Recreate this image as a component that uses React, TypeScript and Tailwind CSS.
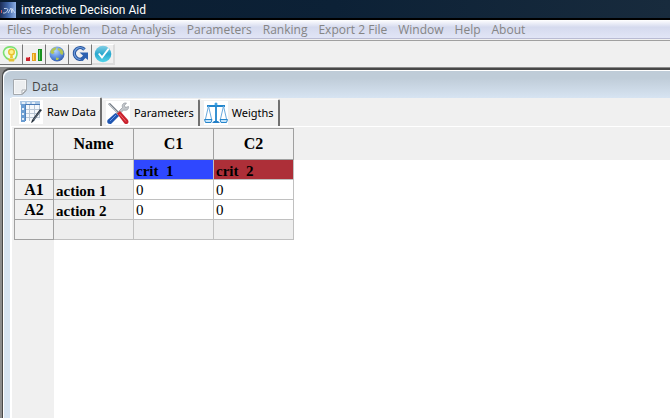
import type { ReactNode } from 'react';

const MENU_ITEMS = [
  'Files',
  'Problem',
  'Data Analysis',
  'Parameters',
  'Ranking',
  'Export 2 File',
  'Window',
  'Help',
  'About',
];

const ROWS = [
  { id: 'A1', name: 'action 1', values: [0, 0] },
  { id: 'A2', name: 'action 2', values: [0, 0] },
];

function AppLogo() {
  return (
    <svg width="16" height="16" viewBox="0 0 16 16" className="shrink-0" aria-hidden="true">
      <defs>
        <linearGradient id="logo" x1="0" x2="1">
          <stop offset="0" stopColor="#1c2c54" />
          <stop offset="0.5" stopColor="#3f66a8" />
          <stop offset="1" stopColor="#8fb0e4" />
        </linearGradient>
      </defs>
      <rect width="16" height="16" fill="url(#logo)" />
      <path d="M1.5 8v3" stroke="#c9575c" />
      <path d="M4 6.500h2.500l1.500 1-1 2-2 1.500H3M8 11l3-5 1 5M13 6.500l-1.500 4M12 6.500l3 4.500" fill="none" stroke="#dbe6f8" strokeWidth="0.800" />
    </svg>
  );
}

function BulbIcon() {
  return (
    <svg width="18" height="18" viewBox="0 0 18 18" aria-hidden="true">
      <path d="M7 14.500C3 13 .5 8.500 2 5.500S7 1.500 10 2s5 3.500 5 6.500-1 4-2 5.500" fill="#f0fbea" stroke="#7be070" strokeWidth="1.600" />
      <circle cx="9.500" cy="7" r="2.800" fill="#fff08a" stroke="#e6c032" strokeWidth="1.400" />
      <path d="M8.500 9.500h2l.5 3.500h-3z" fill="#efc52d" />
      <path d="M6 13.500h7l-1 3H7z" fill="#e3c235" />
    </svg>
  );
}

function BarsIcon() {
  return (
    <svg width="18" height="18" viewBox="0 0 18 18" aria-hidden="true">
      <rect x="1" y="12" width="4" height="4" fill="#c9202b" />
      <path d="M1 12.500h3" stroke="#f08488" />
      <rect x="7" y="8" width="4" height="8" fill="#e8a21c" />
      <path d="M8.500 9v6" stroke="#ffd86b" />
      <rect x="13" y="4" width="4" height="12" fill="#18911f" />
      <path d="M14.500 5v10" stroke="#66d866" />
    </svg>
  );
}

function GlobeIcon() {
  return (
    <svg width="18" height="18" viewBox="0 0 18 18" aria-hidden="true">
      <defs>
        <radialGradient id="globe" cx="0.400" cy="0.300" r="0.750">
          <stop offset="0" stopColor="#b2d2ff" />
          <stop offset="0.600" stopColor="#5b8cdc" />
          <stop offset="1" stopColor="#3158a6" />
        </radialGradient>
      </defs>
      <circle cx="9" cy="9" r="7.500" fill="url(#globe)" />
      <path d="M2.500 6l2-2.500 4-1.500-1 3-2 1 1 2-2 1-2-1zM10 3l3.500 1 2 3-1 3-2-1-1-3-2-1zM8 12.500l3 .5-1 2H8z" fill="#b4c552" />
    </svg>
  );
}

function ReloadIcon() {
  return (
    <svg width="18" height="18" viewBox="0 0 18 18" aria-hidden="true">
      <path d="M13.500 4.500A5.800 5.800 0 1 0 12 13.500" fill="none" stroke="#2a569c" strokeWidth="3.400" />
      <path d="M13.500 4.500A5.800 5.800 0 1 0 12 13.500" fill="none" stroke="#6d9ddf" strokeWidth="1.400" />
      <path d="M8.500 7.500H17V15l-2.500-2-3 3-2.500-2 3-3.500z" fill="#2d62b1" />
    </svg>
  );
}

function CheckIcon() {
  return (
    <svg width="18" height="18" viewBox="0 0 18 18" aria-hidden="true">
      <defs>
        <linearGradient id="check" x1="0" y1="0" x2="0" y2="1">
          <stop offset="0" stopColor="#83cfe5" />
          <stop offset="0.500" stopColor="#29a8ce" />
          <stop offset="1" stopColor="#53d5ea" />
        </linearGradient>
      </defs>
      <circle cx="9" cy="9" r="8.300" fill="url(#check)" />
      <path d="M4 9l1.500-1L8 11l6-8 1.500 1L8 14z" fill="#fff" />
    </svg>
  );
}

function PageIcon() {
  return (
    <svg width="14" height="16" viewBox="0 0 14 16" className="shrink-0" aria-hidden="true">
      <path d="M.5.500h13v11l-4 4H.500z" fill="#f6f7f8" stroke="#a4a9ae" />
      <path d="M2 2h10v9l-3 3H2z" fill="#eceef0" />
      <path d="M13 11H9v4z" fill="#fff" stroke="#a8adb2" />
    </svg>
  );
}

function TableIcon() {
  return (
    <svg width="24" height="24" viewBox="0 0 24 24" aria-hidden="true">
      <rect width="24" height="24" fill="#fff" />
      <rect x="2" y="2" width="19" height="18" fill="#f4f8fc" />
      <path d="M6 9.500h14M6 13.500h14M6 17.500h14M10.500 5v16M15.500 5v16M20.500 3v15" stroke="#b9c7d6" />
      <path d="M1 1h20v4H1z" fill="#a9c6e4" />
      <path d="M2 4h4v18H2z" fill="#6c9ed2" />
      <path d="M6 4.500h15" stroke="#4879b5" />
      <path d="M6.500 4v17" stroke="#4f83be" />
      <path d="M3 2h3v2H3zM8 2h3v2H8zM13 2h3v2h-3zM3 8h2v2H3zM3 13h2v2H3zM3 18h2v2H3z" fill="#e3eef9" />
      <path d="M21 9l2 1-9 12-2 1 1-3z" fill="#29333e" />
      <path d="M20.500 11l.5.500-6.500 8.500" stroke="#8da0b3" fill="none" strokeWidth="0.600" />
    </svg>
  );
}

function ToolsIcon() {
  return (
    <svg width="24" height="24" viewBox="0 0 24 24" aria-hidden="true">
      <rect width="24" height="24" fill="#fff" />
      <path d="M2 3l2-1 11 11-1.500 1.500z" fill="#777e87" />
      <path d="M3 3l11 11" stroke="#c1c6cb" />
      <path d="M9.500 13.500l7-7c-1-3 1-5 4-4.500l-2 2.500 1 2 3-1c.5 3-2 4.500-5 3.500l-6 6.500z" fill="#c3c7cb" stroke="#858c94" strokeWidth="0.600" />
      <path d="M11 12.500l3-2.500 8 9c1.500 3-.5 5-3.500 3.500z" fill="#c9222e" />
      <path d="M13.500 13l6.500 7.500" stroke="#f06a6d" />
      <path d="M9.500 12l3.500 3-8 8c-3 .5-4.500-1.500-3.500-4z" fill="#2157b2" />
      <path d="M10 14l-6 6" stroke="#6e9df0" />
    </svg>
  );
}

function ScalesIcon() {
  return (
    <svg width="24" height="24" viewBox="0 0 24 24" aria-hidden="true">
      <rect width="24" height="24" fill="#fff" />
      <path d="M3 5h18M12 2v18" fill="none" stroke="#2286cd" strokeWidth="1.800" />
      <path d="M4.500 5L1.500 18M4.500 5L7.500 18M19.500 5L16.500 18M19.500 5L22.500 18" stroke="#6aaade" fill="none" />
      <path d="M.5 18.500h7.500l-1 3H1.500zM16 18.500h7.500l-1 3h-5.500z" fill="#c3e4fb" stroke="#2685cb" />
      <path d="M8 22l2-2h4l2 2z" fill="#237fc7" />
      <circle cx="12" cy="3" r="1.500" fill="#3da1e3" />
    </svg>
  );
}

function ToolButton({ label, flat = false, children }: { label: string; flat?: boolean; children: ReactNode }) {
  return (
    <button
      type="button"
      aria-label={label}
      className={`flex h-[21px] w-[23px] items-center justify-center border-t border-t-white ${
        flat
          ? 'border-r-2 border-b-2 border-r-[#dcdcdc] border-b-[#dcdcdc]'
          : 'border-r border-b border-r-[#777777] border-b-[#777777]'
      }`}
    >
      {children}
    </button>
  );
}

function Tab({ label, active = false, children }: { label: string; active?: boolean; children: ReactNode }) {
  return (
    <button
      type="button"
      role="tab"
      aria-selected={active}
      className={`flex items-center gap-1 whitespace-nowrap rounded-t-xs border-t border-r-2 border-t-white border-r-[#707070] pr-1 ${
        active ? 'h-[29px] bg-[#f0f0f0] pl-2' : 'h-[27px] pl-1'
      }`}
    >
      {children}
      {label}
    </button>
  );
}

function DataGrid() {
  const header = 'border border-[#a0a0a0] bg-[#f0f0f0] p-0 text-center text-[16px] leading-none';
  const cell = 'border border-[#c0c0c0] p-0 pl-[2px] text-left text-[15px] leading-none';

  return (
    <table className="w-[280px] shrink-0 table-fixed border-collapse font-['Liberation_Serif',serif] text-black">
      <colgroup>
        <col className="w-[39px]" />
        <col className="w-20" />
        <col className="w-20" />
        <col className="w-20" />
      </colgroup>
      <thead>
        <tr className="h-[31px]">
          <th className={header} />
          <th className={header}>Name</th>
          <th className={header}>C1</th>
          <th className={header}>C2</th>
        </tr>
      </thead>
      <tbody>
        <tr className="h-5">
          <th className={header} />
          <td className={`${cell} bg-[#eeeeee]`} />
          <td className={`${cell} whitespace-pre bg-[#2f48ff] pt-1 font-bold`}>crit  1</td>
          <td className={`${cell} whitespace-pre bg-[#ad2f38] pt-1 font-bold`}>crit  2</td>
        </tr>
        {ROWS.map((row) => (
          <tr key={row.id} className="h-5">
            <th className={header}>{row.id}</th>
            <td className={`${cell} bg-[#eeeeee] pt-1 font-bold`}>{row.name}</td>
            {row.values.map((value, i) => (
              <td key={i} className={`${cell} bg-white pt-px`}>
                {value}
              </td>
            ))}
          </tr>
        ))}
        <tr className="h-5">
          <th className={header} />
          <td className={`${cell} bg-[#eeeeee]`} />
          <td className={`${cell} bg-[#eeeeee]`} />
          <td className={`${cell} bg-[#eeeeee]`} />
        </tr>
      </tbody>
    </table>
  );
}

export default function App() {
  return (
    <div className="flex min-h-screen flex-col overflow-hidden bg-[#f0f0f0] font-['Open_Sans','Noto_Sans',sans-serif]">
      <header className="flex h-5 items-center gap-[5px] border-b-2 border-black bg-linear-to-r from-[#0a1d31] via-[#0c2136] to-[#182b3d] pt-[2px] font-['Roboto',sans-serif] text-[12px] text-white">
        <AppLogo />
        <h1>interactive Decision Aid</h1>
      </header>

      <nav className="flex h-[19px] items-center gap-[11px] border-b border-[#b9bbd3] bg-linear-to-b from-white from-0% via-[#d5daee] via-40% to-[#e1e5f6] pt-px pl-[7px] text-[12px] text-[#858585]">
        {MENU_ITEMS.map((item) => (
          <button key={item} type="button" className="whitespace-nowrap">
            {item}
          </button>
        ))}
      </nav>

      <div className="mt-px flex h-[27px] items-center border-t border-[#a0a0a0]">
        <ToolButton label="Hint"><BulbIcon /></ToolButton>
        <ToolButton label="Chart"><BarsIcon /></ToolButton>
        <ToolButton label="Globe"><GlobeIcon /></ToolButton>
        <ToolButton label="Reload"><ReloadIcon /></ToolButton>
        <ToolButton label="Validate" flat><CheckIcon /></ToolButton>
      </div>

      {/* MDI area with the Data child window */}
      <main className="flex flex-1 flex-col bg-[#8c8c8c] pt-px pl-[2px]">
        <section className="flex flex-1 flex-col rounded-tl-lg border-t-2 border-l border-[#484848] bg-[#d7e4f2]">
          <div className="flex flex-1 flex-col rounded-tl-lg border-t border-l border-white">
            <div className="flex h-[27px] items-center gap-[5px] rounded-tl-lg bg-linear-to-b from-[#bfccd8] from-25% to-[#d7e4f2] pt-1 pl-[9px] text-[12px] text-[#444444]">
              <PageIcon />
              <h2>Data</h2>
            </div>

            <div className="ml-[6px] flex flex-1 flex-col border-l border-white bg-[#f0f0f0]">
              <div role="tablist" className="flex h-7 items-end font-['Noto_Sans',sans-serif] text-[11px] text-black">
                <Tab label="Raw Data" active><TableIcon /></Tab>
                <Tab label="Parameters"><ToolsIcon /></Tab>
                <Tab label="Weigths"><ScalesIcon /></Tab>
              </div>

              <div className="flex flex-1 flex-col border-t border-l border-white pt-px pl-[2px]">
                <div className="flex items-start bg-white">
                  <DataGrid />
                  <div className="h-8 flex-1 bg-[#f0f0f0]" />
                </div>
                <div className="flex flex-1">
                  <div className="w-10" />
                  <div className="flex-1 bg-white" />
                </div>
              </div>
            </div>
          </div>
        </section>
      </main>
    </div>
  );
}
